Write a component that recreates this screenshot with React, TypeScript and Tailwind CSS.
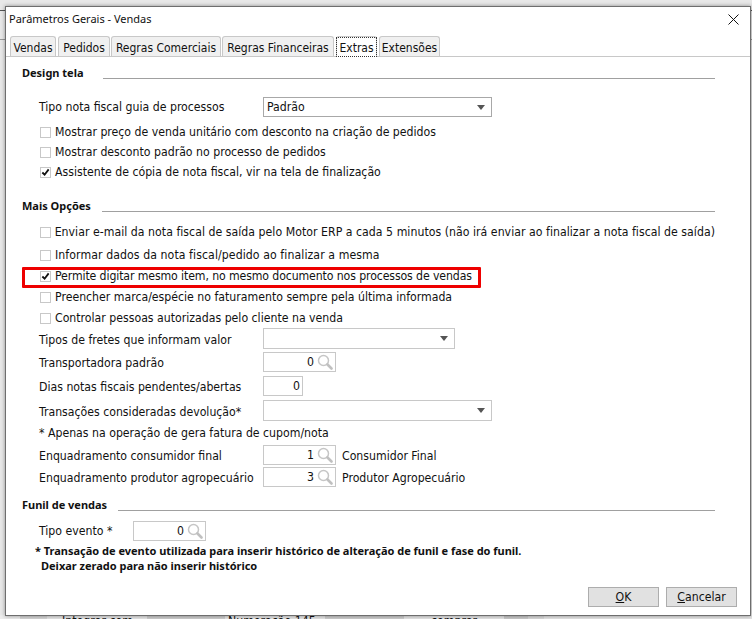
const font = "font-['DejaVu_Sans_Condensed','DejaVu_Sans',sans-serif] [font-stretch:condensed] text-[12.2px] leading-[16px] text-[#111]";
const boldFont = "font-['Noto_Sans',sans-serif] font-bold text-[11px] tracking-[-0.01px]";

const tabs = [
  { label: "Vendas", cls: "w-[46px]" },
  { label: "Pedidos", cls: "w-[52px] ml-[2px]" },
  { label: "Regras Comerciais", cls: "w-[110px] ml-px" },
  { label: "Regras Financeiras", cls: "w-[112px] ml-px" },
  { label: "Extras", cls: "w-[41px] ml-[2px]" },
  { label: "Extensões", cls: "w-[61px] ml-[2px]" },
];

const SectionTitle = ({ title, gap = "gap-[11px]" }: { title: string; gap?: string }) => (
  <div className={`flex items-end h-[14px] ${gap}`}>
    <span className={`${boldFont} leading-[14px]`}>{title}</span>
    <div className="flex-1 h-px bg-[#a0a0a0] mb-[1px]" />
  </div>
);

const Check = ({ label, checked, highlight, tracking = "" }: { label: string; checked?: boolean; highlight?: boolean; tracking?: string }) => (
  <div className="relative flex items-center gap-[4px] h-[21px] pl-[18px]">
    <div className="w-[11px] h-[11px] border border-[#c8c8c8] bg-white flex items-center justify-center">
      {checked && (
        <svg viewBox="0 0 10 10" className="w-[9px] h-[9px]">
          <path d="M1.5 5 L4 7.5 L8.5 1.5" fill="none" stroke="#111" strokeWidth="2" />
        </svg>
      )}
    </div>
    <span className={`whitespace-nowrap pb-[2px] ${tracking}`}>{label}</span>
    {highlight && <div className="absolute left-0 top-[1px] w-[459px] h-[21px] border-[3px] border-[#ee0000] rounded-[1px]" />}
  </div>
);

const Lens = () => (
  <svg viewBox="0 0 16 16" className="w-[16px] h-[16px]">
    <circle cx="6.5" cy="6.5" r="5" fill="none" stroke="#c6c6c6" strokeWidth="1.5" />
    <path d="M10.5 10.5 L14.5 14.5" stroke="#c0c0c0" strokeWidth="2.6" strokeLinecap="round" />
  </svg>
);

const Lookup = ({ value }: { value: string }) => (
  <div className="w-[73px] h-[20px] border border-[#c8c8c8] bg-white flex items-center justify-end pr-[2px] gap-[3px]">
    <span>{value}</span>
    <Lens />
  </div>
);

const Arrow = () => <div className="w-0 h-0 border-x-[4px] border-x-transparent border-t-[5px] border-t-[#555]" />;

const Row = ({ label, children, className = "" }: { label: string; children: React.ReactNode; className?: string }) => (
  <div className={`flex items-center pl-[17px] ${className}`}>
    <span className="w-[224px] pt-[2px] whitespace-nowrap">{label}</span>
    {children}
  </div>
);

const App = () => {
  return (
    <div className={`${font} relative w-[752px] h-[619px] overflow-hidden bg-[#e8e8e8]`}>
      {/* janela de trás, só as bordas aparecem */}
      <div className="h-[10px]" />
      <div className="h-px bg-[#555]" />
      <div className="h-[28px]" />
      <div className="h-px bg-[#999]" />
      <div className="h-[575px]" />
      <div className="h-[4px] flex leading-[12px] overflow-hidden">
        <div className="w-[20px] bg-[#ececec]" />
        <div className="w-[27px] bg-[#d4d4d4]" />
        <div className="w-[100px] bg-[#e4e4e4] pl-[15px] whitespace-nowrap">Integrar com</div>
        <div className="w-[78px] bg-[#cccccc]" />
        <div className="w-[100px] bg-[#e4e4e4] pl-[3px] whitespace-nowrap">Numeração 145</div>
        <div className="w-[79px] bg-[#cccccc]" />
        <div className="w-[100px] bg-[#e4e4e4] pl-[27px] whitespace-nowrap">comprar</div>
        <div className="w-[24px] bg-[#c8c8c8]" />
        <div className="w-[16px] bg-[#d8d8d8]" />
        <div className="flex-1 bg-[#e4e4e4]" />
      </div>

      {/* janela de parâmetros */}
      <div className="absolute left-[5px] top-[6px] w-[746px] h-[610px] bg-white border border-[#6e6e6e] shadow-[0_0_4px_rgba(0,0,0,0.4)] flex flex-col">
        <div className="h-[25px] mb-[4px] flex items-center justify-between pl-[3px]">
          <span className="text-[11px] pb-[2px] font-['Noto_Sans',sans-serif]">Parâmetros Gerais - Vendas</span>
          <svg viewBox="0 0 11 11" className="w-[11px] h-[11px] mr-[11px]">
            <path d="M0.5 0.5 L10.5 10.5 M10.5 0.5 L0.5 10.5" stroke="#111" strokeWidth="1" />
          </svg>
        </div>
        <div className="flex items-end h-[21px] pl-[4px] border-b border-[#c8c8c8]">
          {tabs.map((tab) => (
            <div
              key={tab.label}
              className={`${tab.cls} text-[12px] text-center whitespace-nowrap rounded-t-[3px] border border-b-0 border-[#c8c8c8] ${tab.label === "Extras" ? "h-[21px] -mb-px bg-white" : "h-[20px] bg-[#f0f0f0]"}`}
            >
              <span className={`block h-[18px] mt-[1px] leading-[21px] ${tab.label === "Extras" ? "outline-1 outline-dotted outline-[#333]" : ""}`}>{tab.label}</span>
            </div>
          ))}
        </div>
        <div className="pl-[16px] pr-[35px] pt-[9px] flex flex-col">
          <SectionTitle title="Design tela" gap="gap-[19px]" />
          <div className="flex items-center pl-[17px] mt-[17px]">
            <span className="w-[224px]">Tipo nota fiscal guia de processos</span>
            <div className="w-[229px] h-[20px] border border-[#a8a8a8] flex items-center justify-between px-[3px] pr-[6px]">
              <span>Padrão</span>
              <Arrow />
            </div>
          </div>
          <div className="mt-[5px] flex flex-col -space-y-px">
            <Check label="Mostrar preço de venda unitário com desconto na criação de pedidos" />
            <Check label="Mostrar desconto padrão no processo de pedidos" />
            <Check checked label="Assistente de cópia de nota fiscal, vir na tela de finalização" />
          </div>
          <div className="mt-[16px]">
            <SectionTitle title="Mais Opções" />
          </div>
          <div className="mt-[9px]">
            <Check tracking="tracking-[0.03px]" label="Enviar e-mail da nota fiscal de saída pelo Motor ERP a cada 5 minutos (não irá enviar ao finalizar a nota fiscal de saída)" />
            <div className="mt-[2px]">
              <Check tracking="tracking-[0.08px]" label="Informar dados da nota fiscal/pedido ao finalizar a mesma" />
            </div>
            <Check checked highlight tracking="tracking-[-0.11px]" label="Permite digitar mesmo item, no mesmo documento nos processos de vendas" />
            <Check label="Preencher marca/espécie no faturamento sempre pela última informada" />
            <Check label="Controlar pessoas autorizadas pelo cliente na venda" />
          </div>
          <div className="flex flex-col gap-[4px] -mt-px">
            <Row label="Tipos de fretes que informam valor">
              <div className="w-[192px] h-[21px] border border-[#c8c8c8] flex items-center justify-end pr-[6px]"><Arrow /></div>
            </Row>
            <Row label="Transportadora padrão" className="-mt-px"><Lookup value="0" /></Row>
            <Row label="Dias notas fiscais pendentes/abertas">
              <div className="w-[40px] h-[20px] border border-[#c8c8c8] flex items-center justify-end pr-[2px]">0</div>
            </Row>
            <Row label="Transações consideradas devolução*">
              <div className="w-[229px] h-[21px] border border-[#c8c8c8] flex items-center justify-end pr-[6px]"><Arrow /></div>
            </Row>
          </div>
          <div className="pl-[17px] mt-[4px] h-[16px]">* Apenas na operação de gera fatura de cupom/nota</div>
          <div className="flex flex-col gap-[2px] mt-[4px]">
            <Row label="Enquadramento consumidor final">
              <Lookup value="1" />
              <span className="ml-[6px] pt-[2px]">Consumidor Final</span>
            </Row>
            <Row label="Enquadramento produtor agropecuário">
              <Lookup value="3" />
              <span className="ml-[6px] pt-[2px]">Produtor Agropecuário</span>
            </Row>
          </div>
          <div className="mt-[11px]">
            <SectionTitle title="Funil de vendas" />
          </div>
          <div className="flex items-center pl-[17px] mt-[9px]">
            <span className="w-[94px]">Tipo evento *</span>
            <Lookup value="0" />
          </div>
          <div className={`${boldFont} pl-[13px] mt-[2px] leading-[15px]`}>
            <div>* Transação de evento utilizada para inserir histórico de alteração de funil e fase do funil.</div>
            <div className="pl-[6px]">Deixar zerado para não inserir histórico</div>
          </div>
        </div>
        <div className="flex justify-end gap-[7px] pr-[13px] mt-auto mb-[8px]">
          <div className="w-[71px] h-[20px] bg-[#e1e1e1] border border-[#adadad] flex items-center justify-center"><span><u>O</u>K</span></div>
          <div className="w-[71px] h-[20px] bg-[#e1e1e1] border border-[#adadad] flex items-center justify-center"><span><u>C</u>ancelar</span></div>
        </div>
      </div>
    </div>
  );
};

export default App;
